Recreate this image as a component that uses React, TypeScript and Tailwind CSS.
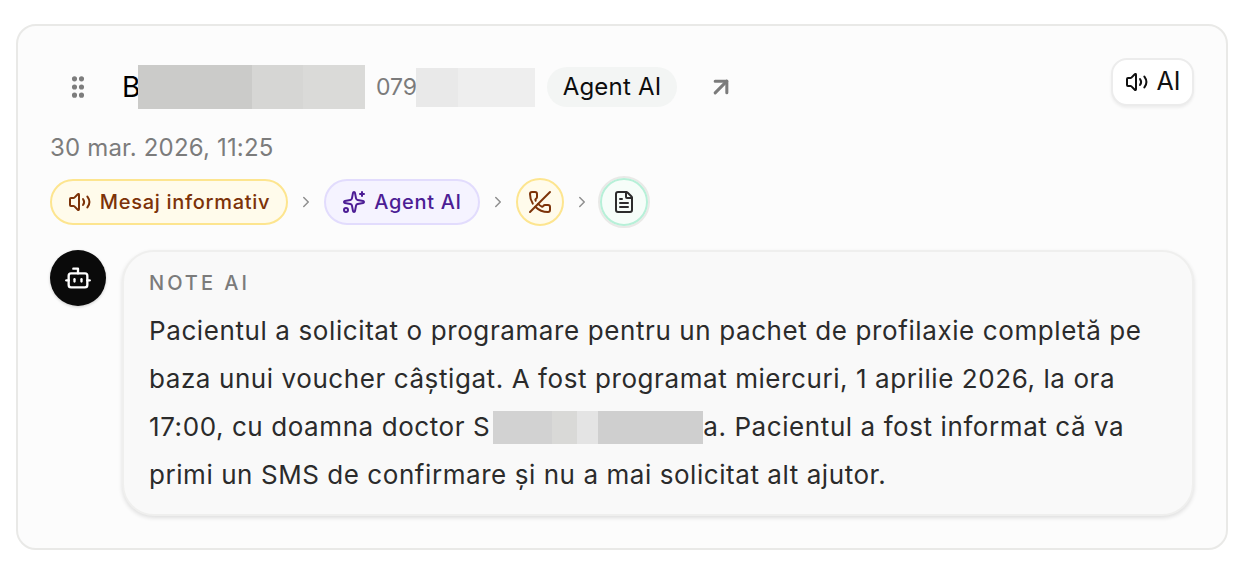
import { ArrowUpRight, Bot, ChevronRight, FileText, GripVertical, PhoneOff, Sparkles } from "lucide-react";

function Speaker({ className }: { className: string }) {
  return (
    <svg viewBox="0 0 24 24" fill="none" stroke="currentColor" strokeWidth="2" strokeLinecap="round" strokeLinejoin="round" className={className}>
      <path d="M11 4.7a.7.7 0 0 0-1.2-.5L6.4 7.6A1.4 1.4 0 0 1 5.4 8H3a1 1 0 0 0-1 1v6a1 1 0 0 0 1 1h2.4a1.4 1.4 0 0 1 1 .4l3.4 3.4a.7.7 0 0 0 1.2-.5z" />
      <path d="M15 9a5 5 0 0 1 0 6" />
      <path d="M19.4 6.6a9 9 0 0 1 0 10.8" />
    </svg>
  );
}

function Chevron() {
  return <ChevronRight className="w-[18px] h-[18px] text-[#8f8f8f] shrink-0" strokeWidth={2} />;
}

export default function App() {
  return (
    <div className="w-[1252px] h-[562px] bg-white pt-6 pl-4 font-['Inter','Liberation_Sans',sans-serif]">
      <div className="w-[1212px] h-[526px] rounded-[20px] border-2 border-[#e9e9e7] bg-[#fcfcfc] pl-[32px] pr-[32px] pt-[32px]">
        <div className="flex items-start justify-between h-[58px]">
          <div className="flex items-center h-[58px]">
            <GripVertical className="w-[28px] h-[28px] ml-[14px] -mt-[1px] text-[#7d7d7d] fill-[#7d7d7d]" strokeWidth={2.4} />
            <div className="flex items-center ml-[30px] h-[58px]">
              <span className="text-[28px] text-black leading-none w-[17px] shrink-0 whitespace-nowrap">B</span>
              <span className="flex h-[44px] -ml-[1px]">
                <span className="w-[114px] bg-[#cbcbc9]" />
                <span className="w-[51px] bg-[#d6d6d4]" />
                <span className="w-[62px] bg-[#dadad8]" />
              </span>
            </div>
            <span className="ml-[11px] text-[23px] text-[#7b7b7b] w-[40px] shrink-0 whitespace-nowrap">079</span>
            <span className="flex h-[39px]">
              <span className="w-[42px] bg-[#e9e9e9]" />
              <span className="w-[77px] bg-[#eeeeee]" />
            </span>
            <span className="ml-[12px] h-[40px] w-[130px] justify-center rounded-full bg-[#f3f5f4] text-[24px] tracking-[0.2px] text-[#0d0d0d] flex items-center whitespace-nowrap">Agent AI</span>
            <ArrowUpRight className="ml-[30px] w-[28px] h-[28px] text-[#7b7b7b]" strokeWidth={2.6} />
          </div>
          <div className="h-[48px] w-[83px] ml-auto rounded-[16px] border-2 border-[#ececec] bg-white shadow-[0_2px_3px_rgba(0,0,0,0.06)] flex items-center justify-center gap-[8px] text-[25px] text-[#111]">
            <Speaker className="w-[24px] h-[24px]" />
            <span>AI</span>
          </div>
        </div>
        <div className="mt-[17px] text-[24px] leading-[30px] tracking-[0.17px] text-[#7c7c7c] whitespace-nowrap">30 mar. 2026, 11:25</div>
        <div className="mt-[14px] flex items-center h-[50px]">
          <div className="h-[46px] w-[238px] rounded-full border-2 border-[#fde58f] bg-[#fffbeb] flex items-center justify-center gap-[8px] text-[#7c3208] text-[20px] font-medium tracking-[0.7px]">
            <Speaker className="w-[24px] h-[24px]" />
            <span className="whitespace-nowrap">Mesaj informativ</span>
          </div>
          <div className="w-[36px] flex justify-center"><Chevron /></div>
          <div className="h-[46px] w-[156px] rounded-full border-2 border-[#e2dcfd] bg-[#f5f3ff] flex items-center justify-center gap-[8px] text-[#4c1d95] text-[20px] font-medium tracking-[0.7px]">
            <Sparkles className="w-[24px] h-[24px]" />
            <span className="whitespace-nowrap">Agent AI</span>
          </div>
          <div className="w-[36px] flex justify-center"><Chevron /></div>
          <div className="w-[48px] h-[48px] rounded-full border-2 border-[#fde58f] bg-[#fffbeb] flex items-center justify-center text-[#7c3208]">
            <PhoneOff className="w-[24px] h-[24px]" />
          </div>
          <div className="w-[36px] flex justify-center"><Chevron /></div>
          <div className="w-[52px] h-[52px] -ml-[2px] -my-[1px] rounded-full border-2 border-[#e9e9e7] flex items-center justify-center shrink-0">
            <div className="w-[48px] h-[48px] rounded-full border-2 border-[#b7f0d8] bg-[#f6fdf9] flex items-center justify-center text-[#2c2c2c]">
              <FileText className="w-[24px] h-[24px]" />
            </div>
          </div>
        </div>
        <div className="mt-[23px] flex items-start">
          <div className="w-[56px] h-[56px] rounded-full bg-[#0a0a0a] flex items-center justify-center shadow-[0_1px_3px_rgba(0,0,0,0.2)] shrink-0">
            <Bot className="w-[28px] h-[28px] text-white" />
          </div>
          <div className="ml-[16px] w-[1072px] h-[266px] rounded-[32px] border-2 border-[#efefee] bg-[#f9f9f9] shadow-[0_2px_4px_rgba(0,0,0,0.12)] px-[25px] pt-[19px]">
            <div className="text-[20px] leading-[24px] font-medium tracking-[3px] text-[#7b7b7b]">NOTE AI</div>
            <div className="mt-[12px] text-[26px] leading-[48px] tracking-[0.58px] text-[#2b2b2b]">
              <div className="whitespace-nowrap tracking-[0.6px]">Pacientul a solicitat o programare pentru un pachet de profilaxie completă pe</div>
              <div className="whitespace-nowrap">baza unui voucher câștigat. A fost programat miercuri, 1 aprilie 2026, la ora</div>
              <div className="whitespace-nowrap flex items-center">
                <span>17:00, cu doamna doctor S</span>
                <span className="flex h-[33px] ml-[3px]">
                  <span className="w-[59px] bg-[#d2d2d2]" />
                  <span className="w-[25px] bg-[#d9d9d7]" />
                  <span className="w-[21px] bg-[#e4e4e4]" />
                  <span className="w-[105px] bg-[#cfcfcf]" />
                </span>
                <span>a. Pacientul a fost informat că va</span>
              </div>
              <div className="whitespace-nowrap tracking-[0.56px]">primi un SMS de confirmare și nu a mai solicitat alt ajutor.</div>
            </div>
          </div>
        </div>
      </div>
    </div>
  );
}
